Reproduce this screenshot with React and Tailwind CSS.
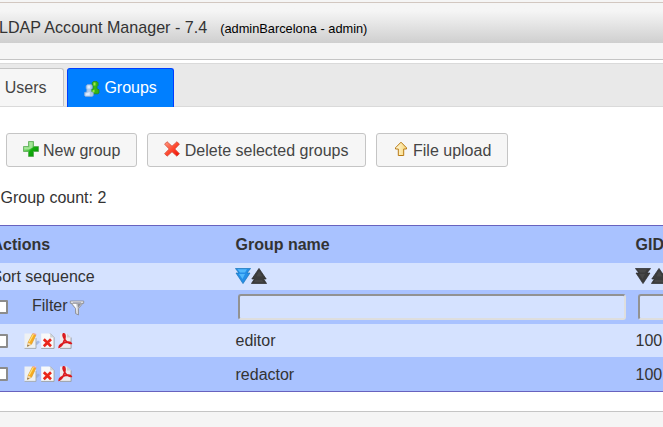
import React from 'react';

function GroupsIcon() {
  return (
    <svg width="16" height="16" viewBox="0 0 16 16" className="shrink-0">
      <path d="M9.300.6h3.700l1.100 1.200v2.500L13 5.600v2.200l2 .9v3.300l-1.300.8H8L7 12V8.700l2-.9V5.600L8.200 4.300V1.800z" fill="#36b512" stroke="#258616" strokeWidth=".7" />
      <path d="M9.500 1.500h2v3h-2zM8.500 9.500l2-1v2.700h-2z" fill="#9de84c" />
      <path d="M3.500 3.600h3.700l1.100 1.200v2.400L7.100 8.500v2.300l2.200.8v2.900L8 15.500H1.500L.5 14.500v-2.900l2.300-.8V8.500L2.100 7.200V4.800z" fill="#accbed" stroke="#86a9d2" strokeWidth=".7" />
      <path d="M3.500 4.500h2.700v3H3.500zM1.700 12.400l4-1.400v3.400h-4z" fill="#ddecff" />
    </svg>
  );
}

function PlusIcon() {
  return (
    <svg width="16" height="16" viewBox="0 0 16 16" className="shrink-0">
      <defs>
        <linearGradient id="plusFill" x1="0" y1="0" x2="1" y2="1">
          <stop offset="0" stopColor="#b6e8a8" />
          <stop offset=".45" stopColor="#55c84a" />
          <stop offset=".55" stopColor="#12ac0c" />
          <stop offset="1" stopColor="#099108" />
        </linearGradient>
      </defs>
      <path d="M5.500.5h5v5h5v5h-5v5h-5v-5h-5v-5h5z" fill="url(#plusFill)" stroke="#4da347" strokeWidth=".7" />
      <path d="M6.300 1.300h3.400v5.200L6 8.500H1.300V6.300h5z" fill="#b9ecac" opacity=".75" />
    </svg>
  );
}

function DeleteIcon() {
  return (
    <svg width="16" height="16" viewBox="0 0 16 16" className="shrink-0">
      <defs>
        <linearGradient id="crossFill" x1="0" y1="0" x2="1" y2="1">
          <stop offset="0" stopColor="#ffa088" />
          <stop offset=".5" stopColor="#ff4a30" />
          <stop offset="1" stopColor="#f00800" />
        </linearGradient>
      </defs>
      <path d="M3 .7 8 5.200 13 .7 15.400 3.200 10.800 8l4.600 4.700-2.500 2.500L8 10.800l-4.900 4.400L.6 12.700 5.200 8 .6 3.200z" fill="url(#crossFill)" stroke="#d44a38" strokeWidth=".8" strokeLinejoin="round" />
    </svg>
  );
}

function UploadIcon() {
  return (
    <svg width="16" height="16" viewBox="0 0 16 16" className="shrink-0">
      <defs>
        <linearGradient id="arrowFill" x1="0" y1="0" x2="1" y2="0">
          <stop offset="0" stopColor="#fff9dc" />
          <stop offset="1" stopColor="#f8d577" />
        </linearGradient>
      </defs>
      <path d="M8 1.200 13.500 6.800v1.200h-2.800v6.500H5.300V8H2.500V6.800z" fill="url(#arrowFill)" stroke="#b87a14" strokeWidth="1" />
    </svg>
  );
}

function FilterIcon() {
  return (
    <svg width="16" height="17" viewBox="0 0 16 17" className="shrink-0">
      <path d="M1.500 3.500 6.500 9.500v5l3 1.500V9.500l5-6z" fill="#d4d5da" stroke="#85868c" strokeWidth=".8" />
      <path d="M3.500 4.500h3.500L8.300 14l-1.300-5z" fill="#fff" />
      <path d="M8.500 5H12L9 9z" fill="#8c8e95" />
      <path d="M1.300 2h13.400v2.300H1.300z" fill="#ededf2" stroke="#85868c" strokeWidth=".8" strokeLinejoin="round" />
      <path d="M4 3h8v.9H4z" fill="#a9abbb" />
    </svg>
  );
}

function SortDownIcon({ active }) {
  return (
    <svg width="16" height="16" viewBox="0 0 16 16" className="shrink-0">
      <path d="M.4.500h15.200l-3.600 4.500h3L8 15.600 1 5h3z" fill={active ? '#258fe8' : '#3b3b3b'} stroke={active ? '#1674b8' : '#292929'} strokeWidth=".7" />
      <path d="M2.500 1.300h9.500L10 4.500H5zM4 6h6L7.500 11z" fill={active ? '#51b8fb' : '#484848'} />
    </svg>
  );
}

function SortUpIcon() {
  return (
    <svg width="16" height="16" viewBox="0 0 16 16" className="shrink-0">
      <path d="M.4 15.500h15.200l-3-4.500h2.600L8 .4.800 11h2.600z" fill="#3b3b3b" stroke="#292929" strokeWidth=".7" />
      <path d="M4 12h7l2 2.200H3zM8 3l3.500 5.500h-6z" fill="#474747" />
    </svg>
  );
}

function EditIcon() {
  return (
    <svg width="16" height="16" viewBox="0 0 16 16" className="shrink-0">
      <path d="m10 11 4-3.500 2 1.500-3 3z" fill="#8fa9dd" opacity=".7" />
      <path d="M.5.500h11.500v15H.5z" fill="#eef1f3" />
      <path d="M.5 15.400H12V5" fill="none" stroke="#a0a6ab" strokeWidth=".9" />
      <path d="M3.500 13.500 4.200 9.300 8.600.8l3.300 1.500L7.600 11.200z" fill="#f7ac20" stroke="#d38b20" strokeWidth=".5" />
      <path d="m5.200 9 4.300-8" stroke="#ffe27a" strokeWidth="1.200" />
      <path d="m8.600.8 3.300 1.500.6-1.300L9.500 0z" fill="#f0a098" />
      <path d="m3.500 13.500.7-4 3 1.700z" fill="#f2d9ae" />
      <path d="m3.500 13.500.2-1.700 1.200.6z" fill="#333" />
    </svg>
  );
}

function RemoveDocIcon() {
  return (
    <svg width="16" height="16" viewBox="0 0 16 16" className="shrink-0">
      <path d="M.2.500h9l4 4v11H.2z" fill="#f8f9fa" />
      <path d="M.2 15.400h12.900V4.500L9.200.5" fill="none" stroke="#969ba0" strokeWidth=".9" />
      <path d="M9.200.5v4h4z" fill="#cfd3d6" />
      <path d="m2.800 6.300 7.200 7m0-7-7.200 7" stroke="#e9261a" strokeWidth="2.700" />
    </svg>
  );
}

function PdfIcon() {
  return (
    <svg width="16" height="16" viewBox="0 0 16 16" className="shrink-0">
      <path d="M2 .5h7l4 4v11H2z" fill="#eeebed" />
      <path d="M2 15.400h11.100V4.500" fill="none" stroke="#969ba0" strokeWidth=".9" />
      <path d="M9 .5v4h4z" fill="#cfcfd2" />
      <path d="M5.500.800c2 0 1.700 3.400 1 6-1 3.300-2.700 6.300-5.300 7.300 0-2.300 3.200-3.900 6.300-4.600 2.700-.6 5.300-.3 5.700.9-2 .3-5.200-1.700-6.500-4.100C5.500 4.500 4.700 2 5.500.8z" fill="none" stroke="#db1a1e" strokeWidth="1.700" />
    </svg>
  );
}

function Checkbox() {
  return <span className="block h-[14px] w-[14px] shrink-0 rounded-[1px] border-2 border-[#8c8c8c] bg-white" />;
}

function ToolButton({ icon, children, className, iconClass = 'mr-1' }) {
  return (
    <button className={`flex h-[34px] shrink-0 items-center rounded-[3px] border border-[#c5c5c5] bg-[#f6f6f6] pl-4 text-[#454545] ${className}`}>
      <span className={`-mt-[3px] ${iconClass}`}>{icon}</span>
      <span className="whitespace-nowrap pt-px">{children}</span>
    </button>
  );
}

function GroupRow({ name, gid, className, textClass }) {
  return (
    <div className={`grid grid-cols-[244px_400px_120px] items-center ${className}`}>
      <div className="flex items-center pl-[2.5px]">
        <Checkbox />
        <div className="ml-4 flex gap-px">
          <EditIcon />
          <RemoveDocIcon />
          <PdfIcon />
        </div>
      </div>
      <span className={textClass}>{name}</span>
      <span className={textClass}>{gid}</span>
    </div>
  );
}

export default function App() {
  return (
    <div className="h-[427px] w-[663px] overflow-hidden bg-white font-['Liberation_Sans',Arial,sans-serif] text-base leading-5 text-[#333]">
      <header className="h-[60px] border-b border-[#c5c5c5] bg-[#f5f5f5] pt-[2px]">
        <div className="flex h-[41px] items-center border-t border-[#d2c7c0] bg-linear-to-b from-[#f5f5f5] from-20% to-[#cfcfcf] pt-[9px]">
          <span className="-mt-[2px] -ml-px whitespace-nowrap text-[16.1px]">LDAP Account Manager - 7.4</span>
          <span className="ml-[13px] pt-[2px] text-[12.8px] text-black">(adminBarcelona - admin)</span>
        </div>
      </header>

      <nav className="mt-[3px] flex h-[44px] border-y border-[#dadada] bg-[#e9e9e9] pt-1">
        <div className="-ml-2 mr-[3px] flex h-[38px] w-[72px] items-center rounded-t-[3px] border border-b-0 border-[#c5c5c5] bg-[#f6f6f6] pl-[11.7px] text-[#454545]">Users</div>
        <div className="z-10 flex h-[39px] w-[107px] shrink-0 items-center rounded-t-[3px] border border-b-0 border-[#003eff] bg-[#007fff] pl-4 text-white">
          <span className="mt-px mr-[4.400px]"><GroupsIcon /></span>
          Groups
        </div>
      </nav>

      <main className="h-[304px]">
        <div className="flex gap-[10px] pl-[6px] pt-[26px]">
          <ToolButton icon={<PlusIcon />} className="w-[131px]">New group</ToolButton>
          <ToolButton icon={<DeleteIcon />} className="w-[219px]" iconClass="mr-[4.800px]">Delete selected groups</ToolButton>
          <ToolButton icon={<UploadIcon />} className="w-[132px]">File upload</ToolButton>
        </div>
        <p className="mt-[21px] h-[37px] pl-[0.5px]">Group count: 2</p>

        <section className="-ml-[8.5px] w-[764px] border-y border-[#6862be]">
          <div className="grid h-[37px] grid-cols-[244px_400px_120px] items-center bg-[#a9c2ff] font-bold">
            <span>Actions</span>
            <span>Group name</span>
            <span>GID number</span>
          </div>
          <div className="grid h-[27px] grid-cols-[244px_400px_120px] items-center bg-[#d5e2ff]">
            <span>Sort sequence</span>
            <span className="-mt-px -ml-[0.5px] flex"><SortDownIcon active /><SortUpIcon /></span>
            <span className="-mt-px -ml-[0.5px] flex"><SortDownIcon /><SortUpIcon /></span>
          </div>
          <div className="grid h-[34px] grid-cols-[244px_400px_120px] items-center bg-[#a9c2ff]">
            <div className="flex items-center pl-[2.5px]">
              <Checkbox />
              <span className="-mt-[2px] ml-6 mr-[1.500px]">Filter</span>
              <FilterIcon />
            </div>
            <input className="ml-[2.5px] h-[26px] w-[387.5px] rounded-[3px] border-2 border-t-[#929292] border-r-[#dedede] border-b-[#dedede] border-l-[#929292] bg-[#d5e2ff]" />
            <input className="ml-[2.5px] h-[26px] w-[110px] rounded-[3px] border-2 border-t-[#929292] border-r-[#dedede] border-b-[#dedede] border-l-[#929292] bg-[#d5e2ff]" />
          </div>
          <GroupRow name="editor" gid="10010" className="h-[33px] bg-[#d5e2ff]" />
          <GroupRow name="redactor" gid="10011" className="h-[34px] bg-[#a9c2ff]" textClass="pt-[2px]" />
        </section>
      </main>
      <footer className="h-4 border-t border-[#c5c5c5] bg-[#f5f5f5]" />
    </div>
  );
}
